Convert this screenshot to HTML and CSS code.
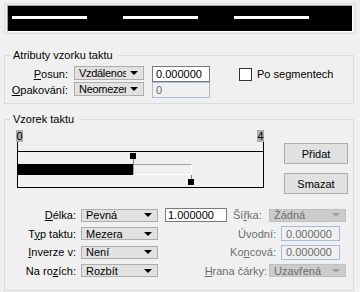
FILE: index.html
```html
<!DOCTYPE html>
<html lang="cs">
<head>
    <meta charset="UTF-8">
    <meta name="viewport" content="width=device-width, initial-scale=1.0">
    <title>Vzorek taktu</title>
    <link rel="stylesheet" href="styles.css">
</head>
<body>

    <div class="preview">
        <div class="preview-line">
            <span class="preview-dash"></span>
            <span class="preview-dash"></span>
            <span class="preview-dash"></span>
        </div>
    </div>

    <fieldset class="group attr-group">
        <legend>Atributy vzorku taktu</legend>
        <div class="attr-row">
            <label class="lbl attr-lbl"><u>P</u>osun:</label>
            <div class="combo attr-combo"><span class="combo-text">Vzdálenost</span></div>
            <input class="field attr-field" type="text" value="0.000000">
            <label class="check"><input type="checkbox">Po se<u>g</u>mentech</label>
        </div>
        <div class="attr-row">
            <label class="lbl attr-lbl"><u>O</u>pakování:</label>
            <div class="combo attr-combo"><span class="combo-text">Neomezeno</span></div>
            <input class="field attr-field" type="text" value="0" disabled>
        </div>
    </fieldset>

    <fieldset class="group pattern-group">
        <legend>Vzorek taktu</legend>
        <div class="pattern-area">
            <div class="editor">
                <div class="ruler">
                    <span class="mark">0</span>
                    <span class="mark">4</span>
                </div>
                <div class="ticks"></div>
                <div class="pattern">
                    <span class="dash"></span>
                    <span class="gap"></span>
                    <span class="stem stem-1"></span>
                    <span class="handle handle-1"></span>
                    <span class="stem stem-2"></span>
                    <span class="handle handle-2"></span>
                </div>
            </div>
            <div class="buttons">
                <button type="button">Přidat</button>
                <button type="button">Smazat</button>
            </div>
        </div>

        <div class="opts">
            <div class="opt-row">
                <label class="lbl opt-lbl"><u>D</u>élka:</label>
                <div class="combo opt-combo"><span class="combo-text">Pevná</span></div>
                <div class="opt-right">
                    <input class="field len-field" type="text" value="1.000000">
                    <label class="lbl off width-lbl">Ší<u>ř</u>ka:</label>
                    <div class="combo opt-combo off"><span class="combo-text">Žádná</span></div>
                </div>
            </div>
            <div class="opt-row">
                <label class="lbl opt-lbl">T<u>y</u>p taktu:</label>
                <div class="combo opt-combo"><span class="combo-text">Mezera</span></div>
                <div class="opt-right">
                    <label class="lbl off">Úvodní:</label>
                    <input class="field end-field" type="text" value="0.000000" disabled>
                </div>
            </div>
            <div class="opt-row">
                <label class="lbl opt-lbl"><u>I</u>nverze v:</label>
                <div class="combo opt-combo"><span class="combo-text">Není</span></div>
                <div class="opt-right">
                    <label class="lbl off">Ko<u>n</u>cová:</label>
                    <input class="field end-field" type="text" value="0.000000" disabled>
                </div>
            </div>
            <div class="opt-row">
                <label class="lbl opt-lbl">Na ro<u>z</u>ích:</label>
                <div class="combo opt-combo"><span class="combo-text">Rozbít</span></div>
                <div class="opt-right">
                    <label class="lbl off edge-lbl"><u>H</u>rana čárky:</label>
                    <div class="combo opt-combo off"><span class="combo-text">Uzavřená</span></div>
                </div>
            </div>
        </div>
    </fieldset>

</body>
</html>
```

FILE: styles.css
```css
body {
    margin: 0;
    background-color: #f0f0f0;
    font-family: "Liberation Sans", Arial, sans-serif;
    font-size: 11px;
    color: #000;
}

u {
    text-underline-offset: 1px;
}

/* line preview on top */
.preview {
    margin: 3px 4px 0;
    height: 31px;
    box-sizing: border-box;
    border: 1px solid #dcdcdc;
    padding: 1px 2px;
}

.preview-line {
    display: flex;
    gap: 36px;
    height: 27px;
    box-sizing: border-box;
    padding: 10px 0 0 4px;
    background-color: #000;
    border-top: 1px solid #a0a0a0;
    border-left: 1px solid #a0a0a0;
    border-bottom: 1px solid #fff;
    border-right: 1px solid #fff;
}

.preview-dash {
    width: 75px;
    height: 3px;
    background-color: #fff;
}

/* group boxes */
.group {
    width: 350px;
    box-sizing: border-box;
    min-width: 0;
    margin: 15px 0 0 4px;
    border: 1px solid #dcdcdc;
    padding: 4px 5px 5px;
}

.group legend {
    padding: 0 5px 0 3px;
    line-height: 13px;
}

.pattern-group {
    margin-top: 9px;
    padding-bottom: 10px;
}

.lbl {
    white-space: nowrap;
}

.off {
    color: #6d6d6d;
}

/* combo boxes */
.combo {
    display: flex;
    align-items: center;
    box-sizing: border-box;
    border: 1px solid #adadad;
    background-color: #e1e1e1;
    padding-left: 4px;
    line-height: 12px;
}

.combo::after {
    content: "";
    border-left: 4px solid transparent;
    border-right: 4px solid transparent;
    border-top: 4px solid #000;
    margin: 0 5px 0 4px;
}

.combo.off {
    background-color: #cccccc;
    border-color: #bfbfbf;
}

.combo.off::after {
    border-top-color: #a0a0a0;
}

.combo-text {
    flex: 1;
    overflow: hidden;
    white-space: nowrap;
}

.attr-combo .combo-text {
    letter-spacing: -0.3px;
}

/* text fields */
.field {
    box-sizing: border-box;
    margin: 0;
    padding: 0 0 0 3px;
    font: inherit;
    color: #000;
    background-color: #fff;
    border: 1px solid #7a7a7a;
    border-radius: 0;
    outline: none;
}

.field:disabled {
    color: #6d6d6d;
    background-color: #f0f0f0;
    border-color: #a6bcd8;
}

/* attributes */
.attr-row {
    display: flex;
    align-items: flex-start;
    height: 16px;
}

.attr-lbl {
    width: 58px;
    margin-right: 6px;
    text-align: right;
    line-height: 16px;
}

.attr-combo {
    width: 70px;
    height: 14px;
    margin-right: 8px;
}

.attr-field {
    width: 58px;
    height: 16px;
}

.check {
    display: flex;
    align-items: flex-start;
    margin-left: 29px;
    line-height: 16px;
}

.check input {
    appearance: none;
    width: 13px;
    height: 13px;
    margin: 2px 5px 0 0;
    border: 1px solid #333;
    background-color: #fff;
}

/* pattern editor */
.pattern-area {
    display: flex;
    align-items: flex-start;
}

.editor {
    width: 248px;
    margin-left: 6px;
}

.ruler {
    display: flex;
    justify-content: space-between;
    height: 12px;
}

.mark {
    width: 7px;
    line-height: 12px;
    text-align: center;
    background-color: #acacac;
}

.ticks {
    width: 247px;
    height: 9px;
    margin-left: 1px;
    box-sizing: border-box;
    border-left: 1px solid #000;
    border-right: 1px solid #000;
}

.pattern {
    position: relative;
    display: flex;
    align-items: flex-start;
    width: 247px;
    height: 37px;
    margin-left: 1px;
    box-sizing: border-box;
    border: 1px solid #000;
    padding-top: 12px;
}

.dash {
    width: 115px;
    height: 11px;
    background-color: #000;
}

.gap {
    width: 59px;
    height: 11px;
    box-sizing: border-box;
    border-top: 1px solid #a0a0a0;
    border-left: 1px solid #a0a0a0;
    border-bottom: 1px solid #fff;
    border-right: 1px solid #fff;
}

.handle {
    position: absolute;
    width: 6px;
    height: 6px;
    background-color: #000;
}

.handle-1 {
    left: 112px;
    top: 1px;
}

.handle-2 {
    left: 170px;
    top: 27px;
}

.stem {
    position: absolute;
    width: 1px;
    background-color: #808080;
}

.stem-1 {
    left: 115px;
    top: 7px;
    height: 5px;
}

.stem-2 {
    left: 173px;
    top: 23px;
    height: 4px;
}

.buttons {
    display: flex;
    flex-direction: column;
    gap: 9px;
    margin: 13px 0 0 20px;
}

button {
    width: 64px;
    height: 21px;
    padding: 0;
    font: inherit;
    color: #000;
    background-color: #e1e1e1;
    border: 1px solid #adadad;
    border-radius: 0;
}

/* options below the editor */
.opts {
    margin-top: 12px;
}

.opt-row {
    display: flex;
    align-items: center;
    height: 18px;
}

.opt-row:nth-child(even) {
    height: 19px;
}

.opt-lbl {
    width: 66px;
    margin-right: 5px;
    text-align: right;
}

.opt-combo {
    width: 77px;
    height: 13px;
}

.opt-right {
    display: flex;
    align-items: center;
    justify-content: flex-end;
    width: 181px;
    margin-left: 7px;
}

.len-field {
    width: 62px;
    height: 14px;
    padding-left: 2px;
}

.width-lbl {
    margin-left: 6px;
    margin-right: auto;
}

.end-field {
    width: 59px;
    height: 15px;
    margin: 0 6px 0 5px;
    padding-left: 4px;
}

.edge-lbl {
    margin-right: 2px;
}
```
